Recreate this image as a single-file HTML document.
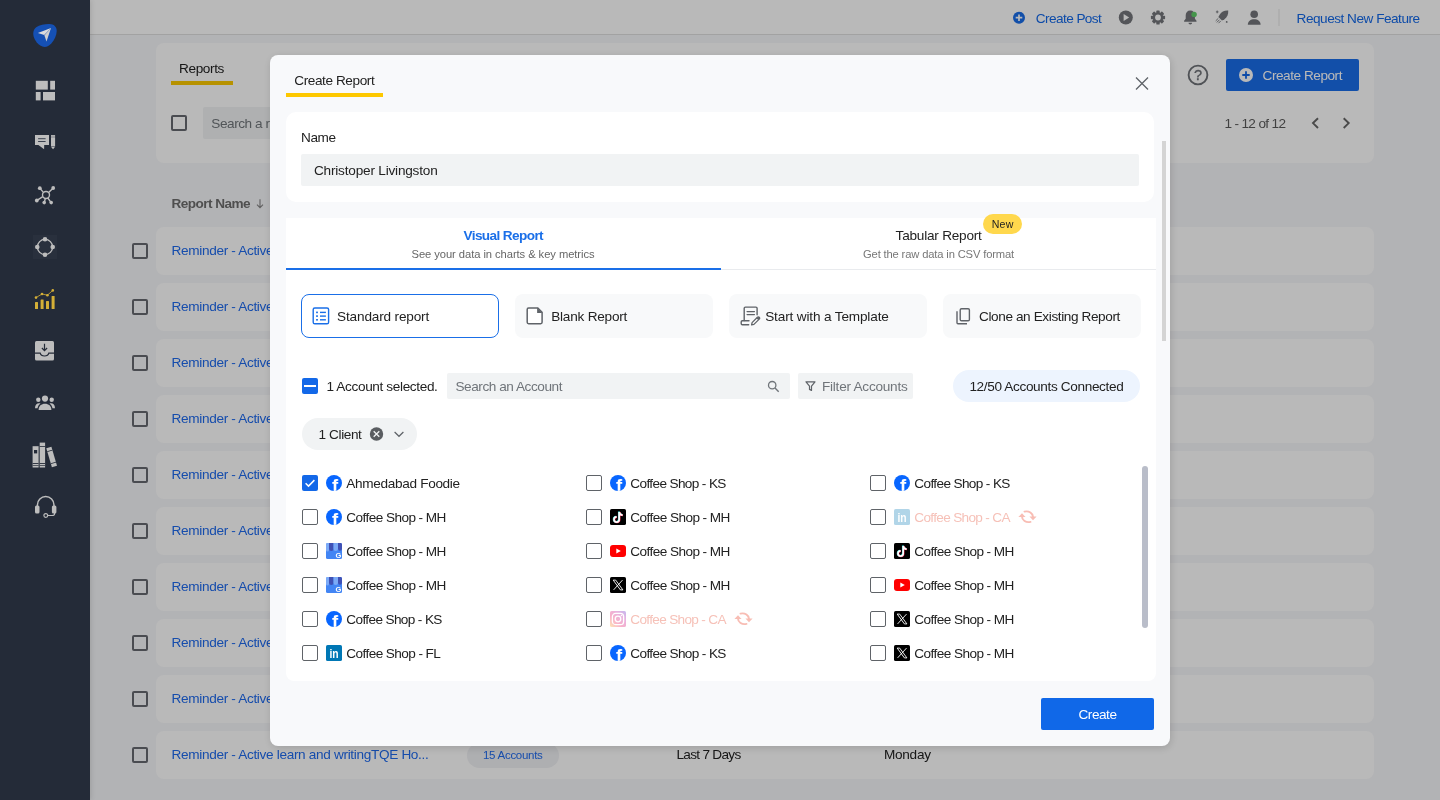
<!DOCTYPE html>
<html lang="en">
<head>
<meta charset="utf-8">
<title>Create Report</title>
<style>
*{box-sizing:border-box;margin:0;padding:0}
html,body{width:1440px;height:800px;overflow:hidden}
body{position:relative;font-family:"Liberation Sans",sans-serif;font-size:14px;color:#222;background:#f6f7fa}
.abs{position:absolute}
.t{position:absolute;white-space:pre;line-height:20px;height:20px;color:#222}
.layer{position:absolute;left:0;top:0;width:1440px;height:800px;will-change:transform}
#side{position:absolute;left:0;top:0;width:90px;height:800px;background:#242b38;z-index:30;box-shadow:1px 0 5px rgba(0,0,0,.12)}
#side svg{position:absolute}
#top{z-index:2}
#topbg{position:absolute;left:90px;top:0;width:1350px;height:35px;background:#fff;border-bottom:1px solid #e0e0e0}
#page{z-index:1}
.card{position:absolute;background:#fff;border-radius:8px}
.cb{position:absolute;width:16px;height:16px;border:2px solid #666970;border-radius:2px}
#ov{position:absolute;left:90px;top:0;width:1350px;height:800px;background:rgba(0,0,0,.275);z-index:10}
#modal{position:absolute;left:270px;top:55px;width:900px;height:691px;background:#f8f9fb;border-radius:8px;z-index:20;box-shadow:1px 2px 8px rgba(0,0,0,.15)}
#m{position:absolute;left:-270px;top:-55px;width:1440px;height:800px;will-change:transform}
.mc{position:absolute;width:16px;height:16px;border:1px solid #5f6368;border-radius:2px;background:#fff}
.ic{position:absolute;width:16px;height:16px}
.opt{position:absolute;top:294px;height:44px;width:198px;border-radius:8px;background:#f8f9fa}
</style>
</head>
<body>
<div id="side">
<svg style="left:0;top:0" width="90" height="540" viewBox="0 0 90 540">
<!-- logo -->
<path d="M36.200 27.300C39.500 24.800 45 23.800 49.500 23.900c4.300.1 7.300 2.600 7.200 7.100-.1 4.300-2.200 9-5.200 12.300-2.400 2.600-5.300 4.100-8.400 3.500-3.300-.7-6.200-3.600-8.100-7-2.400-4.300-2.600-9.600 1.200-12.500z" fill="#1550b4"/>
<path d="M51 28.100 37.900 33l6.350 2z" fill="#dcdcdc"/>
<path d="M51 28.100 44.250 35l2.250 6.500z" fill="#cfcfcf"/>
<path d="M51 28.100 44.250 35l.2.700z" fill="#1550b4" opacity=".35"/>
<!-- dashboard -->
<g fill="#bdbdbd">
<rect x="35.800" y="80.800" width="12" height="8.800"/><rect x="50.200" y="80.800" width="4.800" height="8.800"/>
<rect x="35.800" y="92" width="4.800" height="8.400"/><rect x="43" y="92" width="12" height="8.400"/>
</g>
<!-- message + pencil -->
<path d="M35 135.100h14v10h-4.800l-.1 4.100-5.700-4.100H35z" fill="#bdbdbd"/>
<rect x="38.100" y="138.200" width="7.500" height="1" fill="#3a414e"/><rect x="38.100" y="141" width="7.500" height="1" fill="#3a414e"/>
<rect x="51" y="135.100" width="4.100" height="1.700" fill="#bdbdbd"/><rect x="51" y="137.200" width="4.100" height="9.300" fill="#bdbdbd"/><path d="M51.200 146.900h3.700l-1.850 2.300z" fill="#bdbdbd"/>
<!-- network -->
<g stroke="#bdbdbd" stroke-width="1.400" fill="none">
<circle cx="46" cy="195" r="3.500"/>
<path d="M43.400 192.400 40 188.400M48.600 192.400 53 188.200M42.800 196.700 37 200.300M45.300 198.500 44.300 202.400M47.800 198 51 202.400"/>
</g>
<g fill="#bdbdbd"><circle cx="39.800" cy="188.200" r="1.900"/><circle cx="53.200" cy="188" r="1.900"/><circle cx="36.800" cy="200.500" r="1.900"/><circle cx="44.200" cy="202.600" r="1.800"/><circle cx="51.200" cy="202.600" r="1.800"/></g>
<!-- circle -->
<rect x="33" y="235" width="24" height="24" fill="#29303d"/>
<circle cx="45" cy="247" r="7.600" fill="none" stroke="#bdbdbd" stroke-width="1.400"/>
<g fill="#bdbdbd"><circle cx="45" cy="239.300" r="2.300"/><circle cx="45" cy="254.700" r="2.300"/><circle cx="37.300" cy="247" r="2.300"/><circle cx="52.700" cy="247" r="2.300"/></g>
<!-- chart (active) -->
<g fill="#d4af37">
<rect x="35" y="302" width="3" height="7" rx=".5"/><rect x="40.600" y="299.600" width="3" height="9.400" rx=".5"/><rect x="46" y="301" width="3" height="8" rx=".5"/><rect x="51.600" y="296" width="3" height="13" rx=".5"/>
<circle cx="36" cy="297.600" r="1.300"/><circle cx="42" cy="294" r="1.300"/><circle cx="47.400" cy="295.200" r="1.300"/><circle cx="52.800" cy="290.400" r="1.300"/>
</g>
<path d="M36 297.600 42 294l5.400 1.200 5.400-4.800" fill="none" stroke="#d4af37" stroke-width=".8"/>
<!-- inbox -->
<rect x="35" y="341" width="19" height="19.500" rx="1.500" fill="#bdbdbd"/>
<path d="M44.500 343.800v6.600M41.900 348l2.600 2.600 2.600-2.600" fill="none" stroke="#242b38" stroke-width="1.200"/>
<path d="M35 353.200h5.200c.4 1.700 1.900 2.800 4.300 2.800s3.900-1.100 4.300-2.800H54" fill="none" stroke="#242b38" stroke-width="1.200"/>
<!-- users -->
<g fill="#bdbdbd">
<circle cx="45" cy="398.600" r="3.100"/><path d="M38.600 410c0-4.200 2.800-6.300 6.400-6.300s6.400 2.100 6.400 6.300z"/>
<circle cx="38.300" cy="399.700" r="2.200"/><circle cx="51.700" cy="399.700" r="2.200"/>
<path d="M35 408.300c0-3.400 1.700-5.100 4.100-5.100.5 0 1 .1 1.400.3-1.600 1.200-2.700 2.800-3 4.800z"/>
<path d="M55 408.300c0-3.400-1.700-5.100-4.100-5.100-.5 0-1 .1-1.400.3 1.600 1.200 2.700 2.800 3 4.800z"/>
</g>
<!-- books -->
<g fill="#bdbdbd">
<rect x="32.600" y="446.200" width="6" height="21.300"/><rect x="39.700" y="442.600" width="5.400" height="24.900"/>
<path d="M46.300 448.200 51.400 446.700 57 465.800 51.900 467.300z"/>
</g>
<g fill="#242b38"><rect x="32.600" y="463" width="6" height=".9"/><rect x="32.600" y="465" width="6" height=".7"/><rect x="34" y="450" width="3.200" height="3.400"/>
<rect x="39.700" y="446" width="5.400" height=".8"/><rect x="39.700" y="463" width="5.400" height=".9"/><rect x="39.700" y="465" width="5.400" height=".7"/>
<path d="M47.100 451.200 52.300 449.700 52.500 450.500 47.300 452zM50.900 463.300 56 461.800 56.200 462.600 51.100 464.100z"/></g>
<!-- headset -->
<path d="M37.400 507.500v-2.600a8.300 8.300 0 0 1 16.600 0v2.600" fill="none" stroke="#bdbdbd" stroke-width="1.500"/>
<rect x="35" y="505.400" width="4.500" height="8.200" rx="1.500" fill="#bdbdbd"/><rect x="51.900" y="505.400" width="4.500" height="8.200" rx="1.500" fill="#bdbdbd"/>
<path d="M54.600 513v.4c0 1.400-1.200 2.100-2.600 2.100h-4.400" fill="none" stroke="#bdbdbd" stroke-width="1.200"/>
<circle cx="45.800" cy="515.500" r="1.900" fill="#242b38" stroke="#bdbdbd" stroke-width="1.200"/>
</svg>

</div>
<div id="page" class="layer">
<div class="card" style="left:156px;top:43px;width:1218px;height:120px"></div>
<div class="abs" style="left:171px;top:81px;width:62px;height:4px;background:#fdc900"></div>
<div class="cb" style="left:171px;top:115px"></div>
<div class="abs" style="left:203px;top:107px;width:300px;height:32px;background:#f1f3f4;border-radius:2px"></div>
<svg class="abs" style="left:1186px;top:63px" width="24" height="24" viewBox="0 0 24 24"><circle cx="12" cy="12" r="9.400" fill="none" stroke="#6e7177" stroke-width="1.900"/><text x="12.100" y="17.300" text-anchor="middle" font-family="Liberation Sans,sans-serif" font-size="14.500" fill="#6e7177" stroke="#6e7177" stroke-width=".35">?</text></svg>
<div class="abs" style="left:1226px;top:59px;width:133px;height:32px;background:#1a6de9;border-radius:2px"></div>
<svg class="abs" style="left:1238px;top:67px" width="16" height="16" viewBox="0 0 16 16"><circle cx="8" cy="8" r="7" fill="#fff"/><path d="M4.300 8h7.400M8 4.300v7.400" stroke="#1368e8" stroke-width="1.800"/></svg>
<svg class="abs" style="left:1305px;top:113px" width="55" height="20" viewBox="1305 113 55 20"><path d="M1318 118.200l-5 4.900 5 4.900M1343.700 118.200l5 4.900-5 4.900" fill="none" stroke="#666" stroke-width="1.900"/></svg>
<svg class="abs" style="left:255px;top:197px" width="10" height="13" viewBox="255 197 10 13"><path d="M260 199.300v8.200M257 204.600l3 3 3-3" fill="none" stroke="#858585" stroke-width="1.100"/></svg>
<div class="card" style="left:156px;top:227px;width:1218px;height:48px"></div>
<div class="cb" style="left:132px;top:243px"></div>
<div class="card" style="left:156px;top:283px;width:1218px;height:48px"></div>
<div class="cb" style="left:132px;top:299px"></div>
<div class="card" style="left:156px;top:339px;width:1218px;height:48px"></div>
<div class="cb" style="left:132px;top:355px"></div>
<div class="card" style="left:156px;top:395px;width:1218px;height:48px"></div>
<div class="cb" style="left:132px;top:411px"></div>
<div class="card" style="left:156px;top:451px;width:1218px;height:48px"></div>
<div class="cb" style="left:132px;top:467px"></div>
<div class="card" style="left:156px;top:507px;width:1218px;height:48px"></div>
<div class="cb" style="left:132px;top:523px"></div>
<div class="card" style="left:156px;top:563px;width:1218px;height:48px"></div>
<div class="cb" style="left:132px;top:579px"></div>
<div class="card" style="left:156px;top:619px;width:1218px;height:48px"></div>
<div class="cb" style="left:132px;top:635px"></div>
<div class="card" style="left:156px;top:675px;width:1218px;height:48px"></div>
<div class="cb" style="left:132px;top:691px"></div>
<div class="card" style="left:156px;top:731px;width:1218px;height:48px"></div>
<div class="cb" style="left:132px;top:747px"></div>
<div class="abs" style="left:467px;top:743px;width:92px;height:25px;border-radius:13px;background:#f0f1f4"></div>


<div class="t" style="left:171.5px;top:241px;font-size:13.6px;color:#1f6aee;letter-spacing:-0.324px;">Reminder - Active learn and writingTQE Ho...</div>
<div class="t" style="left:171.5px;top:297px;font-size:13.6px;color:#1f6aee;letter-spacing:-0.324px;">Reminder - Active learn and writingTQE Ho...</div>
<div class="t" style="left:171.5px;top:353px;font-size:13.6px;color:#1f6aee;letter-spacing:-0.324px;">Reminder - Active learn and writingTQE Ho...</div>
<div class="t" style="left:171.5px;top:409px;font-size:13.6px;color:#1f6aee;letter-spacing:-0.324px;">Reminder - Active learn and writingTQE Ho...</div>
<div class="t" style="left:171.5px;top:465px;font-size:13.6px;color:#1f6aee;letter-spacing:-0.324px;">Reminder - Active learn and writingTQE Ho...</div>
<div class="t" style="left:171.5px;top:521px;font-size:13.6px;color:#1f6aee;letter-spacing:-0.324px;">Reminder - Active learn and writingTQE Ho...</div>
<div class="t" style="left:171.5px;top:577px;font-size:13.6px;color:#1f6aee;letter-spacing:-0.324px;">Reminder - Active learn and writingTQE Ho...</div>
<div class="t" style="left:171.5px;top:633px;font-size:13.6px;color:#1f6aee;letter-spacing:-0.324px;">Reminder - Active learn and writingTQE Ho...</div>
<div class="t" style="left:171.5px;top:689px;font-size:13.6px;color:#1f6aee;letter-spacing:-0.324px;">Reminder - Active learn and writingTQE Ho...</div>
<div class="t" style="left:171.5px;top:745px;font-size:13.6px;color:#1f6aee;letter-spacing:-0.324px;">Reminder - Active learn and writingTQE Ho...</div>
<div class="t" style="left:483.0px;top:745px;font-size:11.5px;color:#1f6aee;letter-spacing:-0.278px;">15 Accounts</div>
<div class="t" style="left:676.5px;top:745px;font-size:13.6px;letter-spacing:-0.707px;">Last 7 Days</div>
<div class="t" style="left:884.0px;top:745px;font-size:13.6px;letter-spacing:-0.279px;">Monday</div>
<div class="t" style="left:179.0px;top:59px;font-size:13.6px;letter-spacing:-0.373px;">Reports</div>
<div class="t" style="left:211.3px;top:114px;font-size:13.6px;color:#70757a;letter-spacing:-0.447px;">Search a report</div>
<div class="t" style="left:171.5px;top:194px;font-size:13.6px;font-weight:700;color:#6e6e6e;letter-spacing:-0.555px;">Report Name</div>
<div class="t" style="left:1262.6px;top:66px;font-size:13.6px;color:#fff;letter-spacing:-0.461px;">Create Report</div>
<div class="t" style="left:1224.4px;top:114px;font-size:13.6px;color:#5a5a5a;letter-spacing:-0.648px;">1 - 12 of 12</div>
</div>
<div id="top" class="layer">
<div id="topbg"></div>
<svg class="abs" style="left:1000px;top:0" width="300" height="35" viewBox="1000 0 300 35">
<!-- create post plus -->
<circle cx="1019" cy="17.700" r="6" fill="#1a6de9"/><path d="M1015.700 17.700h6.600M1019 14.400v6.600" stroke="#fff" stroke-width="1.700"/>
<!-- play -->
<circle cx="1125.800" cy="17.500" r="7" fill="#74767b"/><path d="M1123.600 14.100v6.800l5.600-3.400z" fill="#fff"/>
<!-- gear -->
<g transform="translate(1158 17.500)" fill="#74767b">
<g><rect x="-1.700" y="-7.100" width="3.400" height="14.200" rx=".7"/><rect x="-1.700" y="-7.100" width="3.400" height="14.200" rx=".7" transform="rotate(45)"/><rect x="-1.700" y="-7.100" width="3.400" height="14.200" rx=".7" transform="rotate(90)"/><rect x="-1.700" y="-7.100" width="3.400" height="14.200" rx=".7" transform="rotate(135)"/></g>
<circle r="5.300"/><circle r="2.900" fill="#fff"/></g>
<!-- bell -->
<path d="M1190.300 10.400c-2.900 0-4.600 2.100-4.600 4.900v3.500l-1.600 2v1h12.400v-1l-1.600-2v-3.500c0-2.800-1.700-4.900-4.600-4.900zM1188.500 22.800h3.600c0 1-.8 1.700-1.800 1.700s-1.800-.7-1.800-1.700z" fill="#74767b"/>
<circle cx="1194.100" cy="14.400" r="2.700" fill="#5fce68"/>
<!-- rocket -->
<g fill="#74767b"><path d="M1228.200 10.600C1224.500 10.300 1221.500 11.800 1219.800 14.500L1218.400 17L1222 20.600L1224.500 19.200C1227.200 17.500 1228.500 14.300 1228.200 10.600Z"/>
<path d="M1218.300 18.300l-2.600 2.600M1219.500 19.700l-2.700 2.700M1220.800 20.900l-2.300 2.300M1217.200 10.500v2.800M1215.900 11.900h2.600" stroke="#74767b" stroke-width=".9" fill="none"/><circle cx="1226.700" cy="21.900" r=".9"/></g>
<!-- user -->
<circle cx="1254.200" cy="14.200" r="3.800" fill="#74767b"/><path d="M1247.800 24.800c0-3.700 2.800-5.600 6.400-5.600s6.400 1.900 6.400 5.600z" fill="#74767b"/>
<rect x="1278.500" y="9" width="1" height="17" fill="#e4e4e4"/>
</svg>

<div class="t" style="left:1035.8px;top:9px;font-size:13.6px;color:#1368e8;letter-spacing:-0.571px;">Create Post</div>
<div class="t" style="left:1296.6px;top:9px;font-size:13.6px;color:#1368e8;letter-spacing:-0.486px;">Request New Feature</div>
</div>
<div id="ov"></div>
<div id="modal"><div id="m">
<div class="abs" style="left:286px;top:93px;width:97px;height:4px;background:#fdc800"></div>
<svg class="abs" style="left:1134px;top:75px" width="16" height="17" viewBox="0 0 16 17"><path d="M2 2.500l12 12M14 2.500l-12 12" stroke="#5f6368" stroke-width="1.300" fill="none"/></svg>
<div class="abs" style="left:286px;top:112px;width:868px;height:90px;background:#fff;border-radius:10px"></div>
<div class="abs" style="left:301px;top:154px;width:838px;height:32px;background:#f1f3f4;border-radius:2px"></div>
<div class="abs" style="left:286px;top:218px;width:870px;height:463px;background:#fff;border-radius:0 0 8px 8px"></div>
<div class="abs" style="left:286px;top:269px;width:870px;height:1px;background:#e9ebee"></div>
<div class="abs" style="left:286px;top:268.200px;width:435px;height:1.800px;background:#1a6fe8"></div>
<div class="abs" style="left:983px;top:214px;width:39px;height:20px;border-radius:10px;background:#ffd84d"></div>
<div class="opt" style="left:301px;background:#fff;border:1px solid #1a6fe8"></div>
<div class="opt" style="left:515px"></div>
<div class="opt" style="left:729px"></div>
<div class="opt" style="left:943px"></div>
<!-- option icons -->
<svg class="abs" style="left:311px;top:306px" width="20" height="20" viewBox="311 306 20 20"><rect x="313.200" y="308" width="15.400" height="15.800" rx="1.600" fill="none" stroke="#1a6fe8" stroke-width="1.400"/><g fill="#1a6fe8"><rect x="316.100" y="311.600" width="1.800" height="1.600"/><rect x="316.100" y="315.300" width="1.800" height="1.600"/><rect x="316.100" y="319" width="1.800" height="1.600"/><rect x="320" y="311.700" width="5.900" height="1.400"/><rect x="320" y="315.400" width="5.900" height="1.400"/><rect x="320" y="319.100" width="5.900" height="1.400"/></g></svg>
<svg class="abs" style="left:525px;top:306px" width="20" height="20" viewBox="525 306 20 20"><path d="M528.600 308h9.200l4.300 4.300v10c0 .8-.6 1.400-1.400 1.400h-12.100c-.8 0-1.400-.6-1.400-1.400v-12.900c0-.8.600-1.400 1.400-1.400z" fill="#fff" stroke="#5f6368" stroke-width="1.500"/><path d="M537.100 307.700l5.300 5.300h-5.300z" fill="#5f6368"/></svg>
<svg class="abs" style="left:739px;top:305px" width="22" height="22" viewBox="739 305 22 22"><g fill="none" stroke="#5f6368" stroke-width="1.400" stroke-linejoin="round" stroke-linecap="round"><path d="M744.200 320.600v-12.300c0-.7.500-1.200 1.200-1.200h10.500c.7 0 1.200.5 1.200 1.200v6.400"/><path d="M749 320.700h-6.600c-.7 0-1.200.5-1.200 1.200v1.700c0 .7.500 1.200 1.200 1.200h6.300"/><path d="M747.100 311.600h7.300M747.100 314.600h7.300"/></g><path d="M751.600 324.900l.5-2.300 5.300-5.300c.5-.5 1.300-.5 1.800 0s.5 1.300 0 1.800l-5.300 5.300z" fill="#fff" stroke="#5f6368" stroke-width="1.300" stroke-linejoin="round"/><path d="M756.400 318.300l2.700-1.600.6 1.800-1.500 1.600z" fill="#5f6368"/></svg>
<svg class="abs" style="left:954px;top:306px" width="20" height="20" viewBox="954 306 20 20"><rect x="960.200" y="308.700" width="9.200" height="12.100" rx="1.300" fill="none" stroke="#5f6368" stroke-width="1.400"/><path d="M957 311.300v11.500c0 .6.400 1 1 1h9" fill="none" stroke="#5f6368" stroke-width="1.400"/></svg>
<!-- select-all (indeterminate) -->
<div class="abs" style="left:302px;top:378px;width:16px;height:16px;background:#1368e8;border-radius:2px"></div>
<div class="abs" style="left:304px;top:385px;width:12px;height:2px;background:#fff"></div>
<div class="abs" style="left:447px;top:373px;width:343px;height:26px;background:#f1f3f4;border-radius:2px"></div>
<svg class="abs" style="left:766px;top:379px" width="15" height="15" viewBox="0 0 15 15"><circle cx="6.200" cy="6.200" r="3.700" fill="none" stroke="#70757a" stroke-width="1.300"/><path d="M9 9l3.700 3.700" stroke="#70757a" stroke-width="1.400"/></svg>
<div class="abs" style="left:798px;top:373px;width:115px;height:26px;background:#f1f3f4;border-radius:2px"></div>
<svg class="abs" style="left:804px;top:380px" width="13" height="13" viewBox="0 0 13 13"><path d="M2 1.800h9l-3.500 4.400v4.200l-2-1v-3.200z" fill="none" stroke="#5f6368" stroke-width="1.200" stroke-linejoin="round"/></svg>
<div class="abs" style="left:953px;top:370px;width:187px;height:32px;border-radius:16px;background:#edf4fe"></div>
<div class="abs" style="left:302px;top:418px;width:115px;height:32px;border-radius:16px;background:#f1f3f4"></div>
<svg class="abs" style="left:369px;top:427px" width="40" height="14" viewBox="369 427 40 14"><circle cx="376.500" cy="434" r="6.700" fill="#5a5d61"/><path d="M373.700 431.200l5.600 5.600M379.300 431.200l-5.600 5.600" stroke="#f1f3f4" stroke-width="1.300"/><path d="M394.600 432l4.400 4.300 4.400-4.300" fill="none" stroke="#5f6368" stroke-width="1.200"/></svg>
<div class="abs" style="left:302px;top:475px;width:16px;height:16px;background:#1368e8;border-radius:2px"></div><svg class="abs" style="left:302px;top:475px" width="16" height="16" viewBox="0 0 16 16"><path d="M3.600 8.200l2.900 2.900 5.900-6" fill="none" stroke="#fff" stroke-width="1.500"/></svg>
<svg class="ic" style="left:326px;top:475px" viewBox="0 0 16 16"><clipPath id="fbc00"><circle cx="8" cy="8" r="8"/></clipPath><circle cx="8" cy="8" r="8" fill="#0866ff"/><text clip-path="url(#fbc00)" x="9" y="16.600" text-anchor="middle" font-family="Liberation Sans,sans-serif" font-weight="700" font-size="18.500" fill="#fff">f</text></svg>
<div class="mc" style="left:302px;top:509px"></div>
<svg class="ic" style="left:326px;top:509px" viewBox="0 0 16 16"><clipPath id="fbc01"><circle cx="8" cy="8" r="8"/></clipPath><circle cx="8" cy="8" r="8" fill="#0866ff"/><text clip-path="url(#fbc01)" x="9" y="16.600" text-anchor="middle" font-family="Liberation Sans,sans-serif" font-weight="700" font-size="18.500" fill="#fff">f</text></svg>
<div class="mc" style="left:302px;top:543px"></div>
<svg class="ic" style="left:326px;top:543px" viewBox="0 0 16 16"><rect width="16" height="16" rx="1.500" fill="#4285f4"/><path d="M0 1.500C0 .7.700 0 1.500 0H3v7a1.500 1.500 0 0 1-3 0z" fill="#7baaf7"/><path d="M3 0h4.500v5.800a2.250 2.250 0 0 1-4.500 0z" fill="#3f51b5"/><path d="M7.500 0H12v5.800a2.250 2.250 0 0 1-4.500 0z" fill="#7baaf7"/><path d="M12 0h2.500c.800 0 1.500.7 1.500 1.500v4.300a2 2 0 0 1-4 0z" fill="#3f51b5"/><text x="12.400" y="15.100" text-anchor="middle" font-family="Liberation Sans,sans-serif" font-weight="700" font-size="7.500" fill="#fff">G</text></svg>
<div class="mc" style="left:302px;top:577px"></div>
<svg class="ic" style="left:326px;top:577px" viewBox="0 0 16 16"><rect width="16" height="16" rx="1.500" fill="#4285f4"/><path d="M0 1.500C0 .7.700 0 1.500 0H3v7a1.500 1.500 0 0 1-3 0z" fill="#7baaf7"/><path d="M3 0h4.500v5.800a2.250 2.250 0 0 1-4.500 0z" fill="#3f51b5"/><path d="M7.500 0H12v5.800a2.250 2.250 0 0 1-4.500 0z" fill="#7baaf7"/><path d="M12 0h2.500c.800 0 1.500.7 1.500 1.500v4.300a2 2 0 0 1-4 0z" fill="#3f51b5"/><text x="12.400" y="15.100" text-anchor="middle" font-family="Liberation Sans,sans-serif" font-weight="700" font-size="7.500" fill="#fff">G</text></svg>
<div class="mc" style="left:302px;top:611px"></div>
<svg class="ic" style="left:326px;top:611px" viewBox="0 0 16 16"><clipPath id="fbc04"><circle cx="8" cy="8" r="8"/></clipPath><circle cx="8" cy="8" r="8" fill="#0866ff"/><text clip-path="url(#fbc04)" x="9" y="16.600" text-anchor="middle" font-family="Liberation Sans,sans-serif" font-weight="700" font-size="18.500" fill="#fff">f</text></svg>
<div class="mc" style="left:302px;top:645px"></div>
<svg class="ic" style="left:326px;top:645px" viewBox="0 0 16 16"><rect width="16" height="16" rx="1.600" fill="#0077b5"/><text x="3.500" y="12.700" textLength="9.200" lengthAdjust="spacingAndGlyphs" font-family="Liberation Sans,sans-serif" font-weight="700" font-size="12" fill="#fff">in</text></svg>
<div class="mc" style="left:586px;top:475px"></div>
<svg class="ic" style="left:610px;top:475px" viewBox="0 0 16 16"><clipPath id="fbc10"><circle cx="8" cy="8" r="8"/></clipPath><circle cx="8" cy="8" r="8" fill="#0866ff"/><text clip-path="url(#fbc10)" x="9" y="16.600" text-anchor="middle" font-family="Liberation Sans,sans-serif" font-weight="700" font-size="18.500" fill="#fff">f</text></svg>
<div class="mc" style="left:586px;top:509px"></div>
<svg class="ic" style="left:610px;top:509px" viewBox="0 0 16 16"><rect width="16" height="16" rx="1.600" fill="#000"/><g fill="none" stroke-width="1.700"><path d="M8.800 2.600v7.600a2.600 2.600 0 1 1-2.600-2.600M8.800 2.600c.2 1.900 1.500 3.100 3.400 3.300" stroke="#25f4ee"/><path d="M9.600 3.200v7.600a2.600 2.600 0 1 1-2.600-2.600M9.600 3.200c.2 1.900 1.500 3.100 3.400 3.300" stroke="#fe2c55"/><path d="M9.200 2.900v7.600a2.600 2.600 0 1 1-2.600-2.600M9.200 2.900c.2 1.900 1.500 3.100 3.400 3.300" stroke="#fff"/></g></svg>
<div class="mc" style="left:586px;top:543px"></div>
<svg class="ic" style="left:610px;top:543px" viewBox="0 0 16 16"><rect x="0" y="2.100" width="16" height="11.800" rx="3" fill="#ff0000"/><path d="M6.300 5.400v5.200l4.500-2.600z" fill="#fff"/></svg>
<div class="mc" style="left:586px;top:577px"></div>
<svg class="ic" style="left:610px;top:577px" viewBox="0 0 16 16"><rect width="16" height="16" rx="1.600" fill="#000"/><path d="M3.200 3.100h2.500l7.200 9.800h-2.500z" fill="none" stroke="#fff" stroke-width=".9"/><path d="M12.500 3.100 3.600 12.900" stroke="#fff" stroke-width=".9" fill="none"/></svg>
<div class="mc" style="left:586px;top:611px"></div>
<svg class="ic" style="left:610px;top:611px;opacity:.4" viewBox="0 0 16 16"><defs><linearGradient id="ig" x1="0" y1="1" x2="1" y2="0"><stop offset="0" stop-color="#fdc84b"/><stop offset=".35" stop-color="#f0407a"/><stop offset=".7" stop-color="#c93fb0"/><stop offset="1" stop-color="#6b4fd8"/></linearGradient></defs><rect width="16" height="16" rx="1.600" fill="url(#ig)"/><rect x="2.400" y="2.400" width="11.200" height="11.200" rx="3.200" fill="none" stroke="#fff" stroke-width="1.300"/><circle cx="8" cy="8" r="2.800" fill="none" stroke="#fff" stroke-width="1.300"/><circle cx="11.500" cy="4.500" r=".8" fill="#fff"/></svg>
<svg class="abs" style="left:731.6px;top:610.6px" width="23" height="15.500" viewBox="0 0 20 16" preserveAspectRatio="none"><g fill="none" stroke="#f8bdb4" stroke-width="1.700" stroke-linecap="round"><path d="M7.400 2.700c3.900-1 7.300 1.500 7.400 5.600"/><path d="M12.600 13.300c-3.900 1-7.300-1.500-7.400-5.600"/></g><path d="M11.700 7.800h6.200l-3.100 3.700z" fill="#f8bdb4"/><path d="M8.300 8.200H2.100l3.100-3.700z" fill="#f8bdb4"/></svg>
<div class="mc" style="left:586px;top:645px"></div>
<svg class="ic" style="left:610px;top:645px" viewBox="0 0 16 16"><clipPath id="fbc15"><circle cx="8" cy="8" r="8"/></clipPath><circle cx="8" cy="8" r="8" fill="#0866ff"/><text clip-path="url(#fbc15)" x="9" y="16.600" text-anchor="middle" font-family="Liberation Sans,sans-serif" font-weight="700" font-size="18.500" fill="#fff">f</text></svg>
<div class="mc" style="left:870px;top:475px"></div>
<svg class="ic" style="left:894px;top:475px" viewBox="0 0 16 16"><clipPath id="fbc20"><circle cx="8" cy="8" r="8"/></clipPath><circle cx="8" cy="8" r="8" fill="#0866ff"/><text clip-path="url(#fbc20)" x="9" y="16.600" text-anchor="middle" font-family="Liberation Sans,sans-serif" font-weight="700" font-size="18.500" fill="#fff">f</text></svg>
<div class="mc" style="left:870px;top:509px"></div>
<svg class="ic" style="left:894px;top:509px;opacity:.3" viewBox="0 0 16 16"><rect width="16" height="16" rx="1.600" fill="#0077b5"/><text x="3.500" y="12.700" textLength="9.200" lengthAdjust="spacingAndGlyphs" font-family="Liberation Sans,sans-serif" font-weight="700" font-size="12" fill="#fff">in</text></svg>
<svg class="abs" style="left:1015.6px;top:508.6px" width="23" height="15.500" viewBox="0 0 20 16" preserveAspectRatio="none"><g fill="none" stroke="#f8bdb4" stroke-width="1.700" stroke-linecap="round"><path d="M7.400 2.700c3.900-1 7.300 1.500 7.400 5.600"/><path d="M12.600 13.300c-3.900 1-7.300-1.500-7.400-5.600"/></g><path d="M11.700 7.800h6.200l-3.100 3.700z" fill="#f8bdb4"/><path d="M8.300 8.200H2.100l3.100-3.700z" fill="#f8bdb4"/></svg>
<div class="mc" style="left:870px;top:543px"></div>
<svg class="ic" style="left:894px;top:543px" viewBox="0 0 16 16"><rect width="16" height="16" rx="1.600" fill="#000"/><g fill="none" stroke-width="1.700"><path d="M8.800 2.600v7.600a2.600 2.600 0 1 1-2.600-2.600M8.800 2.600c.2 1.900 1.500 3.100 3.400 3.300" stroke="#25f4ee"/><path d="M9.600 3.200v7.600a2.600 2.600 0 1 1-2.600-2.600M9.600 3.200c.2 1.900 1.500 3.100 3.400 3.300" stroke="#fe2c55"/><path d="M9.200 2.900v7.600a2.600 2.600 0 1 1-2.600-2.600M9.200 2.900c.2 1.900 1.500 3.100 3.400 3.300" stroke="#fff"/></g></svg>
<div class="mc" style="left:870px;top:577px"></div>
<svg class="ic" style="left:894px;top:577px" viewBox="0 0 16 16"><rect x="0" y="2.100" width="16" height="11.800" rx="3" fill="#ff0000"/><path d="M6.300 5.400v5.200l4.500-2.600z" fill="#fff"/></svg>
<div class="mc" style="left:870px;top:611px"></div>
<svg class="ic" style="left:894px;top:611px" viewBox="0 0 16 16"><rect width="16" height="16" rx="1.600" fill="#000"/><path d="M3.200 3.100h2.500l7.200 9.800h-2.500z" fill="none" stroke="#fff" stroke-width=".9"/><path d="M12.500 3.100 3.600 12.900" stroke="#fff" stroke-width=".9" fill="none"/></svg>
<div class="mc" style="left:870px;top:645px"></div>
<svg class="ic" style="left:894px;top:645px" viewBox="0 0 16 16"><rect width="16" height="16" rx="1.600" fill="#000"/><path d="M3.200 3.100h2.500l7.200 9.800h-2.500z" fill="none" stroke="#fff" stroke-width=".9"/><path d="M12.500 3.100 3.600 12.900" stroke="#fff" stroke-width=".9" fill="none"/></svg>

<div class="abs" style="left:1142px;top:466px;width:6px;height:162px;border-radius:3px;background:#b9bdc9"></div>
<div class="abs" style="left:1162px;top:141px;width:4px;height:200px;background:#d4d4d4"></div>
<div class="abs" style="left:1041px;top:698px;width:113px;height:32px;background:#1068e8;border-radius:2px"></div>

<div class="t" style="left:294.3px;top:71px;font-size:13.6px;letter-spacing:-0.415px;">Create Report</div>
<div class="t" style="left:301.0px;top:128px;font-size:13.6px;letter-spacing:-0.441px;">Name</div>
<div class="t" style="left:314.0px;top:161px;font-size:13.6px;letter-spacing:-0.200px;">Christoper Livingston</div>
<div class="t" style="left:463.5px;top:226px;font-size:13.6px;font-weight:700;color:#1a6fe8;letter-spacing:-0.607px;">Visual Report</div>
<div class="t" style="left:411.5px;top:244px;font-size:11.2px;color:#666;letter-spacing:-0.062px;">See your data in charts &amp; key metrics</div>
<div class="t" style="left:895.6px;top:226px;font-size:13.6px;letter-spacing:-0.227px;">Tabular Report</div>
<div class="t" style="left:863.0px;top:244px;font-size:11.2px;color:#777;letter-spacing:-0.148px;">Get the raw data in CSV format</div>
<div class="t" style="left:991.7px;top:214px;font-size:10.6px;letter-spacing:0.199px;">New</div>
<div class="t" style="left:337.1px;top:307px;font-size:13.6px;letter-spacing:-0.165px;">Standard report</div>
<div class="t" style="left:551.2px;top:307px;font-size:13.6px;letter-spacing:-0.216px;">Blank Report</div>
<div class="t" style="left:765.2px;top:307px;font-size:13.6px;letter-spacing:-0.152px;">Start with a Template</div>
<div class="t" style="left:979.0px;top:307px;font-size:13.6px;letter-spacing:-0.391px;">Clone an Existing Report</div>
<div class="t" style="left:326.5px;top:377px;font-size:13.6px;letter-spacing:-0.363px;">1 Account selected.</div>
<div class="t" style="left:455.5px;top:377px;font-size:13.6px;color:#70757a;letter-spacing:-0.449px;">Search an Account</div>
<div class="t" style="left:822.0px;top:377px;font-size:13.6px;color:#70757a;letter-spacing:-0.244px;">Filter Accounts</div>
<div class="t" style="left:969.4px;top:377px;font-size:13.6px;letter-spacing:-0.354px;">12/50 Accounts Connected</div>
<div class="t" style="left:318.5px;top:425px;font-size:13.6px;letter-spacing:-0.387px;">1 Client</div>
<div class="t" style="left:1078.5px;top:705px;font-size:13.6px;color:#fff;letter-spacing:-0.469px;">Create</div>
<div class="t" style="left:346.3px;top:474px;font-size:13.6px;letter-spacing:-0.322px;">Ahmedabad Foodie</div>
<div class="t" style="left:346.3px;top:508px;font-size:13.6px;letter-spacing:-0.566px;">Coffee Shop - MH</div>
<div class="t" style="left:346.3px;top:542px;font-size:13.6px;letter-spacing:-0.566px;">Coffee Shop - MH</div>
<div class="t" style="left:346.3px;top:576px;font-size:13.6px;letter-spacing:-0.566px;">Coffee Shop - MH</div>
<div class="t" style="left:346.3px;top:610px;font-size:13.6px;letter-spacing:-0.628px;">Coffee Shop - KS</div>
<div class="t" style="left:346.3px;top:644px;font-size:13.6px;letter-spacing:-0.580px;">Coffee Shop - FL</div>
<div class="t" style="left:630.3px;top:474px;font-size:13.6px;letter-spacing:-0.628px;">Coffee Shop - KS</div>
<div class="t" style="left:630.3px;top:508px;font-size:13.6px;letter-spacing:-0.566px;">Coffee Shop - MH</div>
<div class="t" style="left:630.3px;top:542px;font-size:13.6px;letter-spacing:-0.566px;">Coffee Shop - MH</div>
<div class="t" style="left:630.3px;top:576px;font-size:13.6px;letter-spacing:-0.566px;">Coffee Shop - MH</div>
<div class="t" style="left:630.3px;top:610px;font-size:13.6px;color:#f6c1b8;letter-spacing:-0.675px;">Coffee Shop - CA</div>
<div class="t" style="left:630.3px;top:644px;font-size:13.6px;letter-spacing:-0.628px;">Coffee Shop - KS</div>
<div class="t" style="left:914.3px;top:474px;font-size:13.6px;letter-spacing:-0.628px;">Coffee Shop - KS</div>
<div class="t" style="left:914.3px;top:508px;font-size:13.6px;color:#f6c1b8;letter-spacing:-0.675px;">Coffee Shop - CA</div>
<div class="t" style="left:914.3px;top:542px;font-size:13.6px;letter-spacing:-0.566px;">Coffee Shop - MH</div>
<div class="t" style="left:914.3px;top:576px;font-size:13.6px;letter-spacing:-0.566px;">Coffee Shop - MH</div>
<div class="t" style="left:914.3px;top:610px;font-size:13.6px;letter-spacing:-0.566px;">Coffee Shop - MH</div>
<div class="t" style="left:914.3px;top:644px;font-size:13.6px;letter-spacing:-0.566px;">Coffee Shop - MH</div>
</div></div>
</body>
</html>
